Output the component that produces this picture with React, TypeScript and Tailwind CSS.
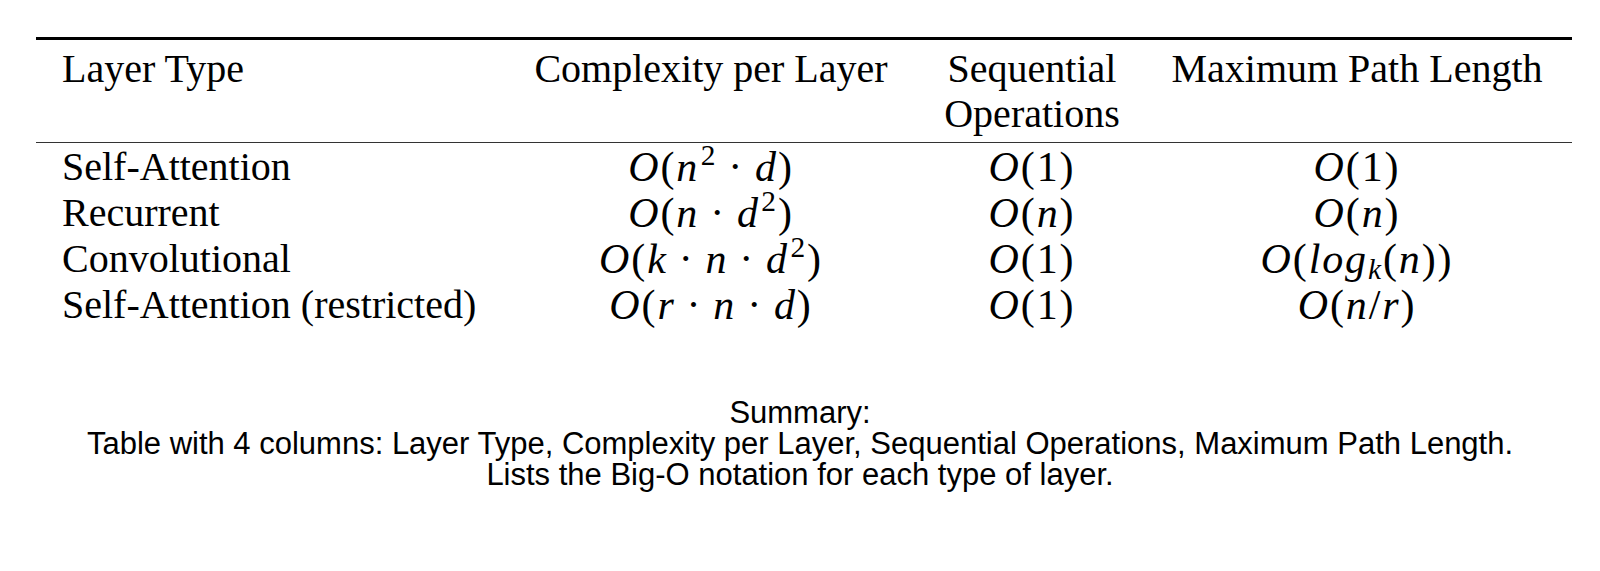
import React from "react";

const I = ({ children }: { children: React.ReactNode }) => (
  <span className="italic">{children}</span>
);

const Dot = () => <span className="mx-[0.26em]">·</span>;

const Sup = ({ children }: { children: React.ReactNode }) => (
  <sup className="text-[0.7em] -top-[0.55em] ml-[0.05em]">{children}</sup>
);

const Sub = ({ children }: { children: React.ReactNode }) => (
  <sub className="text-[0.7em] -bottom-[0.2em]">{children}</sub>
);

const Math = ({ children }: { children: React.ReactNode }) => (
  <span className="text-[42px] tracking-[0.045em]">{children}</span>
);

type Row = {
  name: string;
  complexity: React.ReactNode;
  seq: React.ReactNode;
  path: React.ReactNode;
};

const rows: Row[] = [
  {
    name: "Self-Attention",
    complexity: (
      <Math>
        <I>O</I>(<I>n</I>
        <Sup>2</Sup>
        <Dot />
        <I>d</I>)
      </Math>
    ),
    seq: (
      <Math>
        <I>O</I>(1)
      </Math>
    ),
    path: (
      <Math>
        <I>O</I>(1)
      </Math>
    ),
  },
  {
    name: "Recurrent",
    complexity: (
      <Math>
        <I>O</I>(<I>n</I>
        <Dot />
        <I>d</I>
        <Sup>2</Sup>)
      </Math>
    ),
    seq: (
      <Math>
        <I>O</I>(<I>n</I>)
      </Math>
    ),
    path: (
      <Math>
        <I>O</I>(<I>n</I>)
      </Math>
    ),
  },
  {
    name: "Convolutional",
    complexity: (
      <Math>
        <I>O</I>(<I>k</I>
        <Dot />
        <I>n</I>
        <Dot />
        <I>d</I>
        <Sup>2</Sup>)
      </Math>
    ),
    seq: (
      <Math>
        <I>O</I>(1)
      </Math>
    ),
    path: (
      <Math>
        <I>O</I>(<I>log</I>
        <Sub>
          <I>k</I>
        </Sub>
        (<I>n</I>))
      </Math>
    ),
  },
  {
    name: "Self-Attention (restricted)",
    complexity: (
      <Math>
        <I>O</I>(<I>r</I>
        <Dot />
        <I>n</I>
        <Dot />
        <I>d</I>)
      </Math>
    ),
    seq: (
      <Math>
        <I>O</I>(1)
      </Math>
    ),
    path: (
      <Math>
        <I>O</I>(<I>n</I>/<I>r</I>)
      </Math>
    ),
  },
];

export default function App() {
  return (
    <div className="w-[1600px] h-[571px] bg-white text-black overflow-hidden">
      <div
        className="ml-[36px] mt-[37px] w-[1536px] text-[40px]"
        style={{ fontFamily: '"Liberation Serif", "Times New Roman", serif' }}
      >
        <div className="border-t-[3px] border-black" />
        <div className="grid grid-cols-[464px_422px_220px_430px] leading-[45px] pt-[6px] pb-[6px] border-b border-[#333]">
          <div className="pl-[26px]">Layer Type</div>
          <div className="text-center">Complexity per Layer</div>
          <div className="text-center">Sequential Operations</div>
          <div className="text-center">Maximum Path Length</div>
        </div>
        <div className="leading-[46px] pt-[1px]">
          {rows.map((r) => (
            <div
              key={r.name}
              className="grid grid-cols-[464px_422px_220px_430px] h-[46px]"
            >
              <div className="pl-[26px] whitespace-nowrap">{r.name}</div>
              <div className="text-center whitespace-nowrap">{r.complexity}</div>
              <div className="text-center whitespace-nowrap">{r.seq}</div>
              <div className="text-center whitespace-nowrap">{r.path}</div>
            </div>
          ))}
        </div>
      </div>
      <div
        className="mt-[69px] text-center text-[31px] leading-[31px]"
        style={{ fontFamily: '"Liberation Sans", Arial, sans-serif' }}
      >
        <div>Summary:</div>
        <div>
          Table with 4 columns: Layer Type, Complexity per Layer, Sequential
          Operations, Maximum Path Length.
        </div>
        <div>Lists the Big-O notation for each type of layer.</div>
      </div>
    </div>
  );
}
